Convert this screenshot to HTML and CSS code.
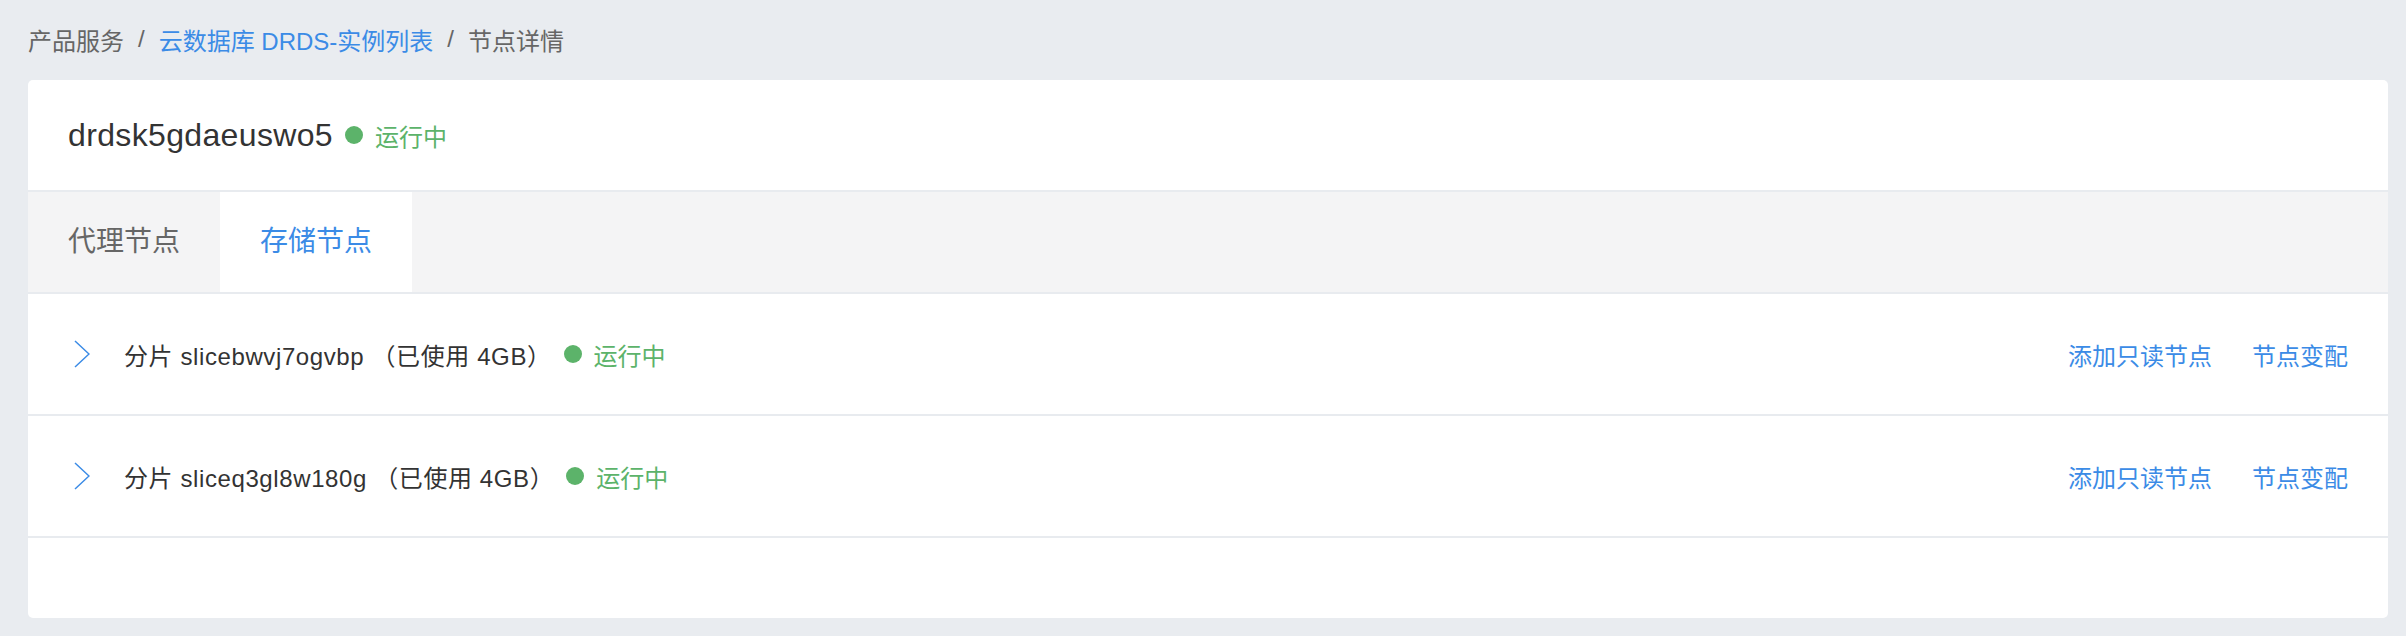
FILE: index.html
```html
<!DOCTYPE html>
<html lang="zh-CN">
<head>
    <meta charset="UTF-8">
    <meta name="viewport" content="width=device-width, initial-scale=1.0">
    <title>节点详情</title>
    <link rel="stylesheet" href="styles.css">
</head>
<body>

<div class="page">
    <!-- Breadcrumb -->
    <div class="breadcrumb">
        <span class="crumb">产品服务</span>
        <span class="sep">/</span>
        <a class="crumb crumb-link" href="#">云数据库 DRDS-实例列表</a>
        <span class="sep">/</span>
        <span class="crumb">节点详情</span>
    </div>

    <div class="card">
        <div class="card-header">
            <span class="instance-name">drdsk5gdaeuswo5</span>
            <span class="status"><i class="dot"></i>运行中</span>
        </div>

        <div class="tabs">
            <div class="tab">代理节点</div>
            <div class="tab active">存储节点</div>
        </div>

        <div class="slice-list">
            <div class="slice-row">
                <svg class="chevron" width="16" height="28" viewBox="0 0 16 28">
                    <polyline points="1,1 15,14 1,27" fill="none" stroke="#3b8be6" stroke-width="1.5"/>
                </svg>
                <span class="slice-name">分片 slicebwvj7ogvbp （已使用 4GB）</span>
                <span class="status"><i class="dot"></i>运行中</span>
                <div class="actions">
                    <a href="#">添加只读节点</a>
                    <a href="#">节点变配</a>
                </div>
            </div>
            <div class="slice-row">
                <svg class="chevron" width="16" height="28" viewBox="0 0 16 28">
                    <polyline points="1,1 15,14 1,27" fill="none" stroke="#3b8be6" stroke-width="1.5"/>
                </svg>
                <span class="slice-name">分片 sliceq3gl8w180g （已使用 4GB）</span>
                <span class="status"><i class="dot"></i>运行中</span>
                <div class="actions">
                    <a href="#">添加只读节点</a>
                    <a href="#">节点变配</a>
                </div>
            </div>
        </div>
    </div>
</div>

</body>
</html>
```

FILE: styles.css
```css
* {
    box-sizing: border-box;
}

body {
    margin: 0;
    padding: 0;
    font-family: "Liberation Sans", "Noto Sans CJK SC", sans-serif;
    background-color: #e9ecf0;
    color: #333;
}

a {
    text-decoration: none;
}

.page {
    padding: 0 18px 18px 28px;
}

/* Breadcrumb */
.breadcrumb {
    height: 80px;
    display: flex;
    align-items: center;
    font-size: 24px;
    color: #666;
    padding-bottom: 2px;
}

.crumb-link {
    color: #3b8be6;
}

.sep {
    padding: 0 14px;
    color: #666;
}

/* Card */
.card {
    background-color: #fff;
    border-radius: 5px;
    overflow: hidden;
}

.card-header {
    height: 112px;
    display: flex;
    align-items: center;
    padding: 0 40px;
    border-bottom: 2px solid #e8ebef;
}

.instance-name {
    font-size: 32px;
    letter-spacing: 0.35px;
    color: #333;
}

.status {
    display: flex;
    align-items: center;
    font-size: 24px;
    color: #5cb36a;
}

.dot {
    display: inline-block;
    width: 18px;
    height: 18px;
    border-radius: 50%;
    background-color: #5cb36a;
    margin: 0 12px;
}

/* Tabs */
.tabs {
    display: flex;
    height: 102px;
    background-color: #f4f4f5;
    border-bottom: 2px solid #e8ebef;
}

.tab {
    padding: 0 40px;
    font-size: 28px;
    line-height: 100px;
    color: #666;
}

.tab.active {
    background-color: #fff;
    color: #3b8be6;
}

/* Slice rows */
.slice-list {
    padding-bottom: 80px;
}

.slice-row {
    height: 122px;
    display: flex;
    align-items: center;
    padding: 0 40px 0 46px;
    border-bottom: 2px solid #e8ebef;
}

.chevron {
    margin-right: 34px;
    flex-shrink: 0;
}

.slice-name {
    font-size: 24px;
    letter-spacing: 0.6px;
    color: #333;
}

.actions {
    margin-left: auto;
    display: flex;
    gap: 40px;
    font-size: 24px;
}

.actions a {
    color: #3b8be6;
}
```
